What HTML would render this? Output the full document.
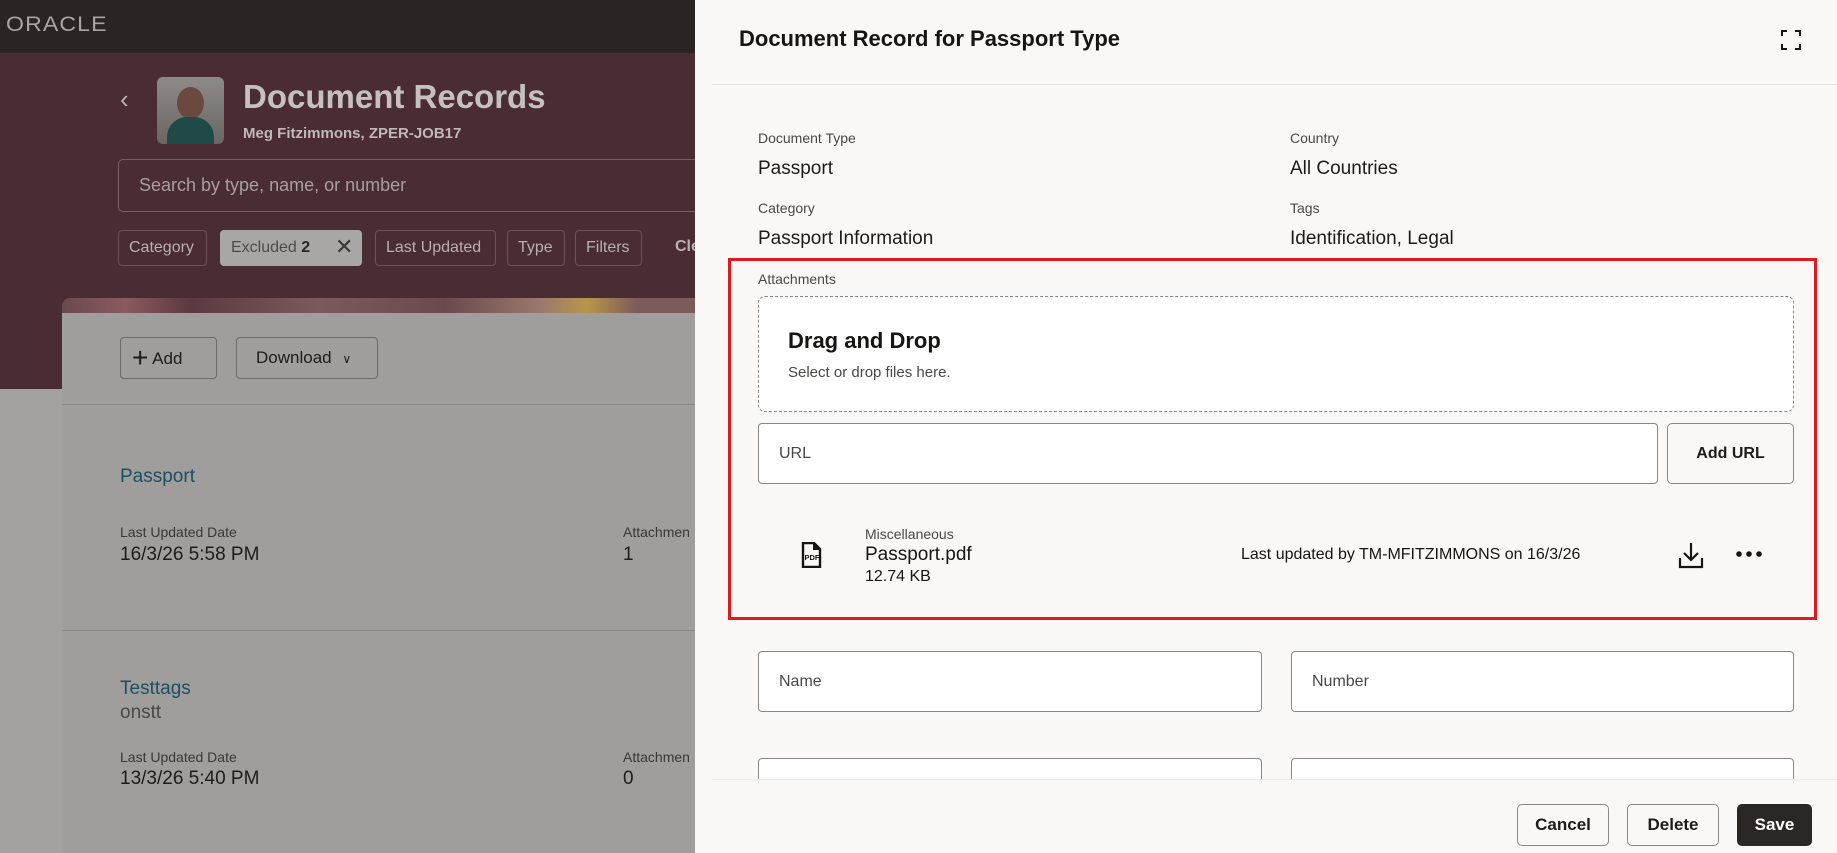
<!DOCTYPE html>
<html><head><meta charset="utf-8"><style>
*{box-sizing:border-box;margin:0;padding:0}
body{width:1837px;height:853px;overflow:hidden;position:relative;font-family:"Liberation Sans",sans-serif;background:#a3a2a0}
.a{position:absolute;white-space:nowrap}
.chip{position:absolute;top:230px;height:36px;border:1px solid #6e5258;border-radius:4px;color:#b9b0b1;font-size:16px;line-height:34px;padding:0 10px}
.lbl{font-size:14px;color:#4a4846}
.val{font-size:19px;color:#1e1c1b}
.inp{position:absolute;background:#fff;border:1px solid #8a8886;border-radius:4px;font-size:16px;color:#4a4846;padding-left:20px}
.btn{position:absolute;border:1px solid #8a8886;border-radius:5px;background:#f9f8f6;font-size:17px;font-weight:bold;color:#1e1c1b;text-align:center}
</style></head><body>
<div class="a" style="left:0;top:0;width:695px;height:53px;background:#2a2523"></div>
<div class="a" style="left:6px;top:13px;font-size:21px;color:#a8a5a3;letter-spacing:1px;transform:scaleX(1.1);transform-origin:left">ORACLE</div>
<div class="a" style="left:0;top:53px;width:695px;height:336px;background:#4a2c33"></div>
<div class="a" style="left:120px;top:84px;font-size:26px;color:#b9b0b1">&#8249;</div>
<div class="a" style="left:157px;top:77px;width:67px;height:67px;border-radius:6px;background:linear-gradient(#8e8a88,#6a6664);overflow:hidden">
<div style="position:absolute;left:20px;top:10px;width:27px;height:32px;border-radius:50%;background:#6a4a3e"></div>
<div style="position:absolute;left:10px;top:40px;width:47px;height:30px;border-radius:20px 20px 0 0;background:#1f4a48"></div></div>
<div class="a" style="left:243px;top:78px;font-size:33px;font-weight:bold;color:#c6c1c1">Document Records</div>
<div class="a" style="left:243px;top:125px;font-size:15px;font-weight:bold;color:#c0b8b9">Meg Fitzimmons, ZPER-JOB17</div>
<div class="a" style="left:118px;top:159px;width:620px;height:53px;border:1px solid #7a6065;border-radius:5px"></div>
<div class="a" style="left:139px;top:175px;font-size:18px;color:#a89fa0">Search by type, name, or number</div>
<div class="chip" style="left:118px;width:89px">Category</div>
<div class="chip" style="left:220px;width:142px;background:#a9a7a6;border-color:#a9a7a6;color:#4e4a49">Excluded <b style="color:#2a2625">2</b> <span style="position:absolute;left:114px;top:-1px;font-size:22px;color:#3a3635">✕</span></div>
<div class="chip" style="left:375px;width:121px">Last Updated</div>
<div class="chip" style="left:507px;width:58px">Type</div>
<div class="chip" style="left:575px;width:67px">Filters</div>
<div class="a" style="left:675px;top:238px;font-size:16px;font-weight:bold;color:#b9b0b1">Cle</div>
<div class="a" style="left:62px;top:298px;width:640px;height:16px;border-radius:8px 0 0 0;background:linear-gradient(90deg,#6a4a50,#8a5a60 10%,#5a3a40 20%,#7a5a5c 40%,#6a4a4e 60%,#9a7a6c 75%,#b8964a 82%,#7a5a5a 90%)"></div>
<div class="a" style="left:62px;top:313px;width:640px;height:540px;background:#9f9e9c"></div>
<div class="a" style="left:120px;top:337px;width:97px;height:42px;border:1px solid #6e6c6a;border-radius:4px;font-size:17px;color:#1e1c1b;line-height:40px;padding-left:11px"><span style="font-size:28px;vertical-align:-3px">+</span> Add</div>
<div class="a" style="left:236px;top:337px;width:142px;height:42px;border:1px solid #6e6c6a;border-radius:4px;font-size:17px;color:#1e1c1b;line-height:40px;padding-left:19px">Download <span style="font-size:12px;margin-left:6px">&#8744;</span></div>
<div class="a" style="left:62px;top:404px;width:640px;height:1px;background:#8a8987"></div>
<div class="a" style="left:120px;top:466px;font-size:19px;color:#1d4f63">Passport</div>
<div class="a" style="left:120px;top:524px;font-size:14px;color:#3a3837">Last Updated Date</div>
<div class="a" style="left:120px;top:544px;font-size:19px;color:#1e1c1b">16/3/26 5:58 PM</div>
<div class="a" style="left:623px;top:524px;font-size:14px;color:#3a3837">Attachmen</div>
<div class="a" style="left:623px;top:544px;font-size:19px;color:#1e1c1b">1</div>
<div class="a" style="left:62px;top:630px;width:640px;height:1px;background:#8a8987"></div>
<div class="a" style="left:120px;top:678px;font-size:19px;color:#1d4f63">Testtags</div>
<div class="a" style="left:120px;top:702px;font-size:19px;color:#4a4846">onstt</div>
<div class="a" style="left:120px;top:749px;font-size:14px;color:#3a3837">Last Updated Date</div>
<div class="a" style="left:120px;top:768px;font-size:19px;color:#1e1c1b">13/3/26 5:40 PM</div>
<div class="a" style="left:623px;top:749px;font-size:14px;color:#3a3837">Attachmen</div>
<div class="a" style="left:623px;top:768px;font-size:19px;color:#1e1c1b">0</div>
<div class="a" style="left:695px;top:0;width:1142px;height:853px;background:#f9f8f6"></div>
<div class="a" style="left:739px;top:26px;font-size:22px;font-weight:bold;color:#161513">Document Record for Passport Type</div>
<svg class="a" style="left:1780px;top:29px" width="22" height="22" viewBox="0 0 22 22" fill="none" stroke="#161513" stroke-width="2"><path d="M2 7V2h5M15 2h5v5M20 15v5h-5M7 20H2v-5"/></svg>
<div class="a" style="left:712px;top:84px;width:1125px;height:1px;background:#e8e6e3"></div>
<div class="a lbl" style="left:758px;top:130px">Document Type</div>
<div class="a val" style="left:758px;top:158px">Passport</div>
<div class="a lbl" style="left:1290px;top:130px">Country</div>
<div class="a val" style="left:1290px;top:158px">All Countries</div>
<div class="a lbl" style="left:758px;top:200px">Category</div>
<div class="a val" style="left:758px;top:228px">Passport Information</div>
<div class="a lbl" style="left:1290px;top:200px">Tags</div>
<div class="a val" style="left:1290px;top:228px">Identification, Legal</div>
<div class="a" style="left:728px;top:258px;width:1089px;height:362px;border:3px solid #e0191f"></div>
<div class="a lbl" style="left:758px;top:271px">Attachments</div>
<div class="a" style="left:758px;top:296px;width:1036px;height:116px;background:#fff;border:1px dashed #8a8886;border-radius:7px"></div>
<div class="a" style="left:788px;top:328px;font-size:22px;font-weight:bold;color:#161513">Drag and Drop</div>
<div class="a" style="left:788px;top:364px;font-size:15px;color:#4a4846">Select or drop files here.</div>
<div class="inp" style="left:758px;top:423px;width:900px;height:61px;line-height:59px">URL</div>
<div class="btn" style="left:1667px;top:423px;width:127px;height:61px;line-height:59px;font-size:16px">Add URL</div>
<svg class="a" style="left:800px;top:542px" width="24" height="26" viewBox="0 0 24 26"><path d="M3 1h11l6 6v18H3z" fill="none" stroke="#161513" stroke-width="2.4"/><path d="M13 1v7h7" fill="#161513"/><text x="4.5" y="18" font-size="7.5" font-weight="bold" font-family="Liberation Sans" fill="#161513">PDF</text></svg>
<div class="a" style="left:865px;top:526px;font-size:14px;color:#4a4846">Miscellaneous</div>
<div class="a" style="left:865px;top:544px;font-size:19px;color:#161513">Passport.pdf</div>
<div class="a" style="left:865px;top:568px;font-size:16px;color:#161513">12.74 KB</div>
<div class="a" style="left:1241px;top:546px;font-size:16px;color:#161513">Last updated by TM-MFITZIMMONS on 16/3/26</div>
<svg class="a" style="left:1678px;top:541px" width="26" height="28" viewBox="0 0 26 28" fill="none" stroke="#161513" stroke-width="2.2"><path d="M13 2v16M6 12l7 7 7-7M2 17v9h22v-9"/></svg>
<svg class="a" style="left:1735px;top:550px" width="28" height="8"><circle cx="4" cy="4" r="2.8" fill="#161513"/><circle cx="14" cy="4" r="2.8" fill="#161513"/><circle cx="24" cy="4" r="2.8" fill="#161513"/></svg>
<div class="inp" style="left:758px;top:651px;width:504px;height:61px;line-height:59px">Name</div>
<div class="inp" style="left:1291px;top:651px;width:503px;height:61px;line-height:59px">Number</div>
<div class="inp" style="left:758px;top:758px;width:504px;height:40px"></div>
<div class="inp" style="left:1291px;top:758px;width:503px;height:40px"></div>
<div class="a" style="left:712px;top:779px;width:1125px;height:74px;background:#f9f8f6;border-top:1px solid #eceae7"></div>
<div class="btn" style="left:1517px;top:804px;width:92px;height:42px;line-height:40px">Cancel</div>
<div class="btn" style="left:1627px;top:804px;width:92px;height:42px;line-height:40px">Delete</div>
<div class="btn" style="left:1737px;top:804px;width:75px;height:42px;line-height:40px;background:#2a2725;border-color:#2a2725;color:#fff">Save</div>
</body></html>
